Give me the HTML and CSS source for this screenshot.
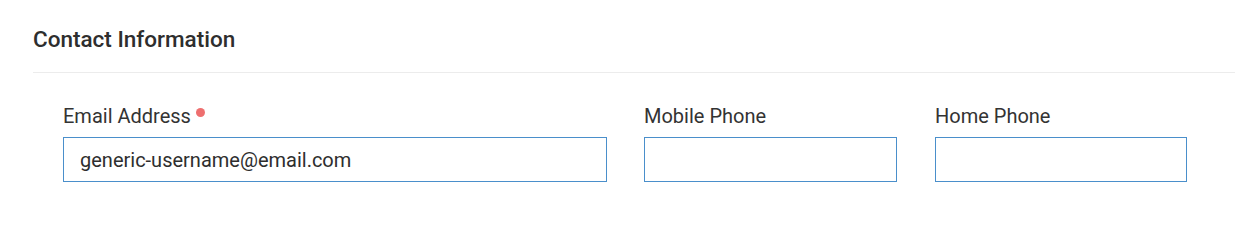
FILE: index.html
```html
<!DOCTYPE html>
<html lang="en">
<head>
    <meta charset="UTF-8">
    <meta name="viewport" content="width=device-width, initial-scale=1.0">
    <title>Contact Information</title>
    <link rel="stylesheet" href="styles.css">
</head>
<body>
    <section class="panel">
        <header class="panel-header">
            <h2>Contact Information</h2>
        </header>

        <div class="fields">
            <div class="field">
                <label for="email">Email Address <span class="required"></span></label>
                <input type="text" id="email" value="generic-username@email.com">
            </div>
            <div class="field">
                <label for="mobile">Mobile Phone</label>
                <input type="text" id="mobile">
            </div>
            <div class="field field-last">
                <label for="home">Home Phone</label>
                <input type="text" id="home">
            </div>
        </div>
    </section>
</body>
</html>
```

FILE: styles.css
```css
* {
    margin: 0;
    padding: 0;
    box-sizing: border-box;
    font-family: 'Roboto', 'Liberation Sans', sans-serif;
}

body {
    background-color: #ffffff;
    color: #333333;
}

.panel {
    padding-left: 33px;
}

.panel-header {
    padding: 26px 0 20px 0;
    border-bottom: 1px solid #ececec;
}
.panel-header h2 {
    font-size: 22.5px;
    font-weight: 500;
    line-height: 26px;
    color: #2e2e2e;
}

.fields {
    display: grid;
    grid-template-columns: 544px 253px 253px;
    column-gap: 37px;
    padding: 32px 0 0 30px;
}
.field-last {
    margin-left: 1px;
}

.field label {
    display: block;
    font-size: 20px;
    line-height: 23px;
    color: #333333;
    margin-bottom: 9px;
}

.required {
    display: inline-block;
    width: 9px;
    height: 9px;
    border-radius: 50%;
    background-color: #ee6f6f;
    vertical-align: 6px;
}

.field input {
    display: block;
    width: 100%;
    height: 45px;
    padding: 0 16px;
    border: 1px solid #4a8fcb;
    border-radius: 0;
    font-size: 20px;
    color: #2e2e2e;
    outline: none;
}
```
